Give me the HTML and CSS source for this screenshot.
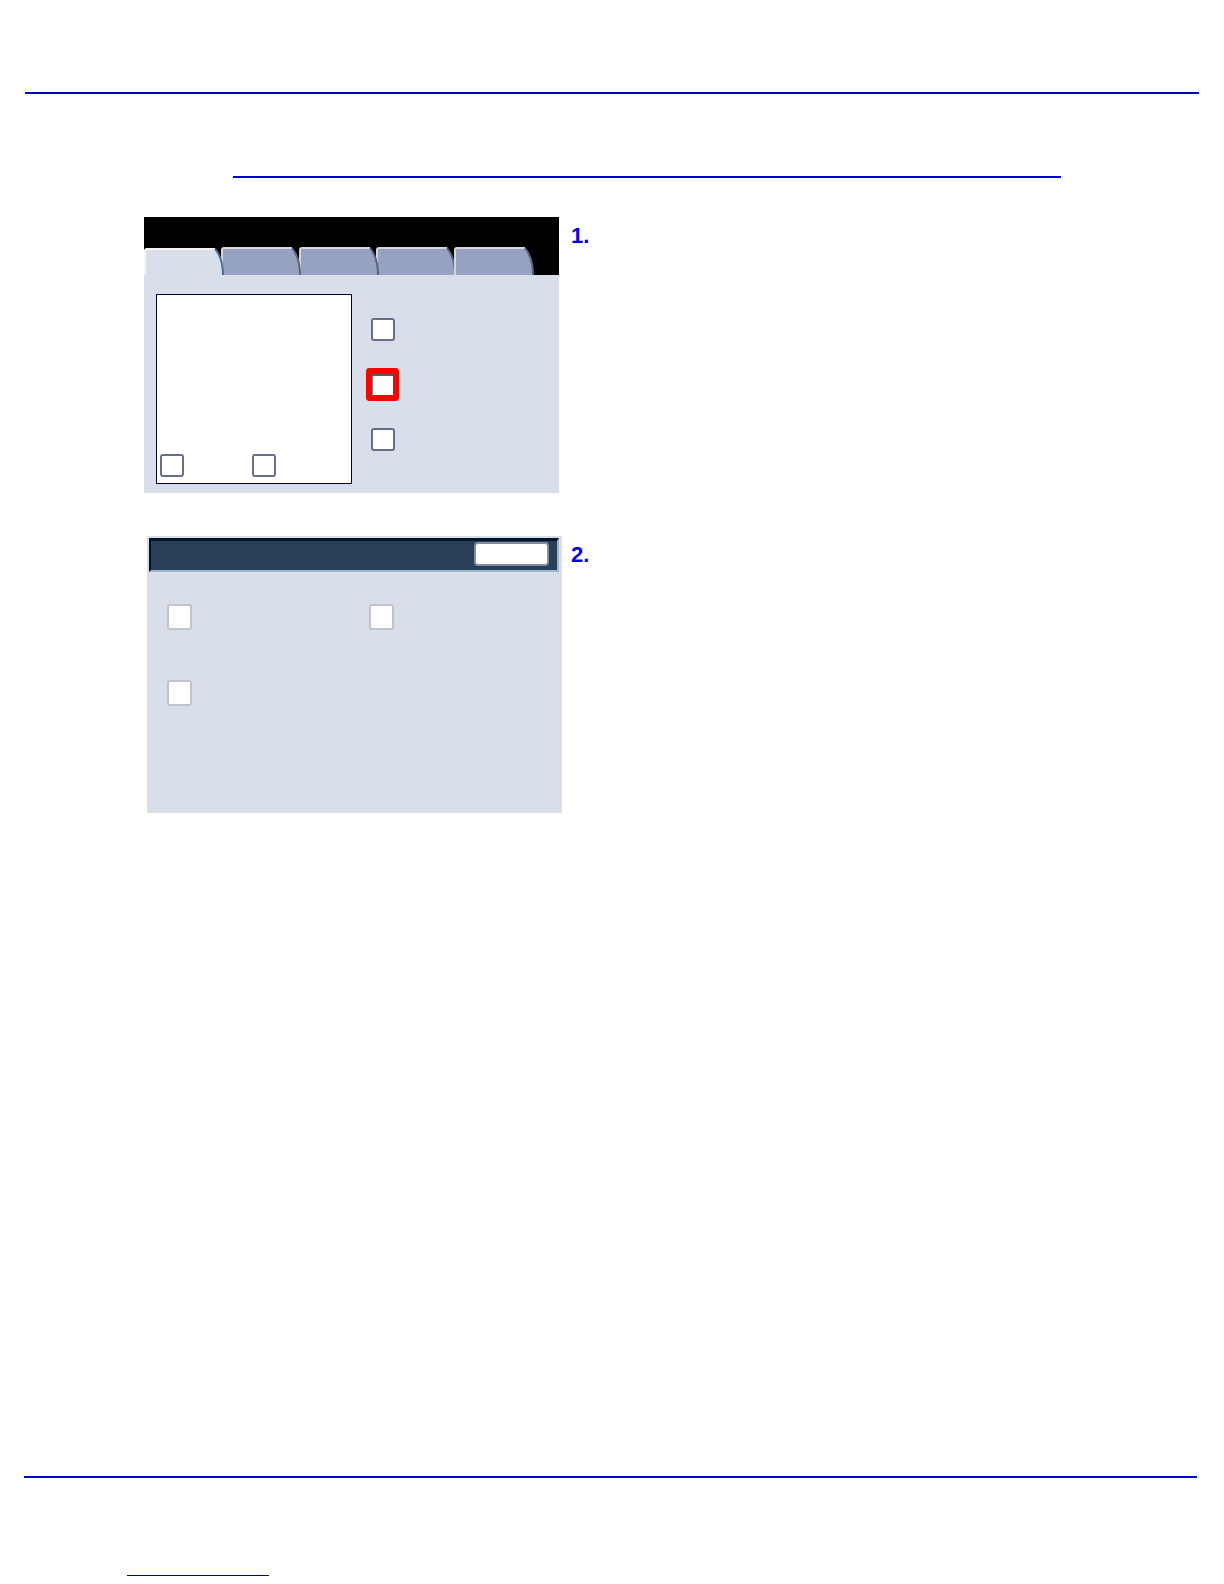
FILE: index.html
```html
<!DOCTYPE html>
<html lang="en">
<head>
    <meta charset="UTF-8">
    <meta name="viewport" content="width=device-width, initial-scale=1.0">
    <title>Document</title>
    <link rel="stylesheet" href="styles.css">
</head>
<body>
    <header class="page-header"></header>
    <main>
        <div class="section-title"></div>
        <ol class="steps">
            <li class="step">
                <div class="panel">
                    <div class="tabs">
                        <button class="tab active" type="button" aria-label="Tab 1">
                            <svg viewBox="0 0 82 28" width="82" height="28">
                                <path class="face" d="M1 28V4Q1 2 3 2H71Q79 11 79 28Z"/>
                                <path class="shine" d="M1 28V4Q1 2 3 2H71"/>
                                <path class="edge" d="M71 2Q79 11 79 28"/>
                            </svg>
                        </button>
                        <button class="tab" type="button" aria-label="Tab 2">
                            <svg viewBox="0 0 82 28" width="82" height="28">
                                <path class="face" d="M1 28V3Q1 1 3 1H71Q79 11 79 28Z"/>
                                <path class="shine" d="M1 28V3Q1 1 3 1H71"/>
                                <path class="edge" d="M71 1Q79 11 79 28"/>
                            </svg>
                        </button>
                        <button class="tab" type="button" aria-label="Tab 3">
                            <svg viewBox="0 0 82 28" width="82" height="28">
                                <path class="face" d="M1 28V3Q1 1 3 1H71Q79 11 79 28Z"/>
                                <path class="shine" d="M1 28V3Q1 1 3 1H71"/>
                                <path class="edge" d="M71 1Q79 11 79 28"/>
                            </svg>
                        </button>
                        <button class="tab" type="button" aria-label="Tab 4">
                            <svg viewBox="0 0 82 28" width="82" height="28">
                                <path class="face" d="M1 28V3Q1 1 3 1H71Q79 11 79 28Z"/>
                                <path class="shine" d="M1 28V3Q1 1 3 1H71"/>
                                <path class="edge" d="M71 1Q79 11 79 28"/>
                            </svg>
                        </button>
                        <button class="tab last" type="button" aria-label="Tab 5">
                            <svg viewBox="0 0 82 28" width="82" height="28">
                                <path class="face" d="M1 28V3Q1 1 3 1H71Q79 11 79 28Z"/>
                                <path class="shine" d="M1 28V3Q1 1 3 1H71"/>
                                <path class="edge" d="M71 1Q79 11 79 28"/>
                            </svg>
                        </button>
                    </div>
                    <div class="tab-body">
                        <div class="preview">
                            <input class="check" type="checkbox" aria-label="Preview option 1">
                            <input class="check" type="checkbox" aria-label="Preview option 2">
                        </div>
                        <div class="options">
                            <input class="check" type="checkbox" aria-label="Option 1">
                            <input class="check highlight" type="checkbox" aria-label="Option 2">
                            <input class="check" type="checkbox" aria-label="Option 3">
                        </div>
                    </div>
                </div>
                <span class="number">1.</span>
            </li>
            <li class="step">
                <div class="panel dialog">
                    <div class="dialog-bar">
                        <button class="close-btn" type="button" aria-label="Close"></button>
                    </div>
                    <div class="dialog-body">
                        <input class="check soft" type="checkbox" aria-label="Setting 1">
                        <input class="check soft" type="checkbox" aria-label="Setting 2">
                        <input class="check soft" type="checkbox" aria-label="Setting 3">
                    </div>
                </div>
                <span class="number">2.</span>
            </li>
        </ol>
    </main>
    <footer class="page-footer">
        <a class="footer-link" href="#" aria-label="Website"></a>
    </footer>
</body>
</html>
```
FILE: styles.css
```css
* {
    box-sizing: border-box;
}
body {
    margin: 0;
    min-height: 100vh;
    display: flex;
    flex-direction: column;
    background: #fff;
    font-family: "Liberation Sans", Arial, sans-serif;
}
.page-header {
    height: 94px;
    margin: 0 25px;
    border-bottom: 2px solid #0000c8;
}
.section-title {
    height: 84px;
    margin: 0 163px 0 233px;
    border-bottom: 2px solid #0000d2;
}

.steps {
    list-style: none;
    margin: 39px 0 0;
    padding: 0 0 0 144px;
    display: flex;
    flex-direction: column;
    gap: 43px;
}
.step {
    display: grid;
    grid-template-columns: 418px auto;
    column-gap: 9px;
    align-items: start;
}
.number {
    padding-top: 6px;
    font-size: 22px;
    line-height: 26px;
    font-weight: bold;
    color: #0000f0;
}
.panel {
    width: 415px;
    background: #d9dfea;
}

/* tabbed panel */
.tabs {
    display: grid;
    grid-template-columns: repeat(5, minmax(0, 1fr));
    padding: 30px 28px 0 0;
    background: #000;
}
/* each tab's curved edge runs a little over the next one */
.tab {
    position: relative;
    height: 28px;
    padding: 0;
    border: none;
    background: none;
    cursor: pointer;
}
.tab svg {
    display: block;
}
.tab:nth-child(1) { z-index: 4; }
.tab:nth-child(2) { z-index: 3; }
.tab:nth-child(3) { z-index: 2; }
.tab:nth-child(4) { z-index: 1; }
.tab.last { z-index: 2; }

.face {
    fill: #97a2c0;
}
.shine {
    fill: none;
    stroke: #d4d6da;
    stroke-width: 2;
}
.edge {
    fill: none;
    stroke: #59647f;
    stroke-width: 2;
}
.active .face {
    fill: #d9dfea;
}
.active .shine {
    stroke: #f4f4f4;
}
.active .edge {
    stroke: #48709a;
}

.tab-body {
    display: flex;
    gap: 19px;
    padding: 19px 12px 9px;
}
.preview {
    width: 196px;
    height: 190px;
    display: flex;
    align-items: flex-end;
    gap: 68px;
    padding: 0 3px 6px;
    border: 1px solid #00003c;
    background: #fff;
}
.options {
    display: flex;
    flex-direction: column;
    gap: 32px;
    padding-top: 24px;
}

.check {
    appearance: none;
    width: 24px;
    height: 23px;
    margin: 0;
    border: 2px solid #686d8e;
    border-radius: 3px;
    background: #fff;
    cursor: pointer;
}
.check:checked {
    background: #97a2c0;
}
.highlight {
    width: 23px;
    border: 1px solid #f00;
    border-radius: 1px;
    box-shadow: 0 0 0 5px #f00, inset 0 2px #5e5478, inset 1px 0 #8d7f9e;
}

/* dialog panel */
.dialog {
    justify-self: end;
    padding: 2px 3px 0 2px;
}
.dialog-bar {
    height: 34px;
    display: flex;
    justify-content: flex-end;
    padding: 1px 8px 0 0;
    border-style: solid;
    border-width: 3px 2px 2px;
    border-color: #00142a #a3b4cd #a3b4cd #00142a;
    background: #283f58;
}
.close-btn {
    width: 75px;
    height: 24px;
    border: 2px solid #838ca0;
    border-radius: 4px;
    background: #fff;
    cursor: pointer;
}
.dialog-body {
    display: grid;
    grid-template-columns: 202px auto;
    row-gap: 50px;
    padding: 32px 18px 107px;
}
.soft {
    width: 25px;
    height: 26px;
    border-color: #c0c3ce;
}

.page-footer {
    height: 108px;
    margin: auto 27px 0 24px;
    padding: 0 0 8px 103px;
    display: flex;
    align-items: flex-end;
    border-top: 2px solid #0000d8;
}
.footer-link {
    width: 142px;
    height: 20px;
    border-bottom: 1px solid #00008c;
}
```
